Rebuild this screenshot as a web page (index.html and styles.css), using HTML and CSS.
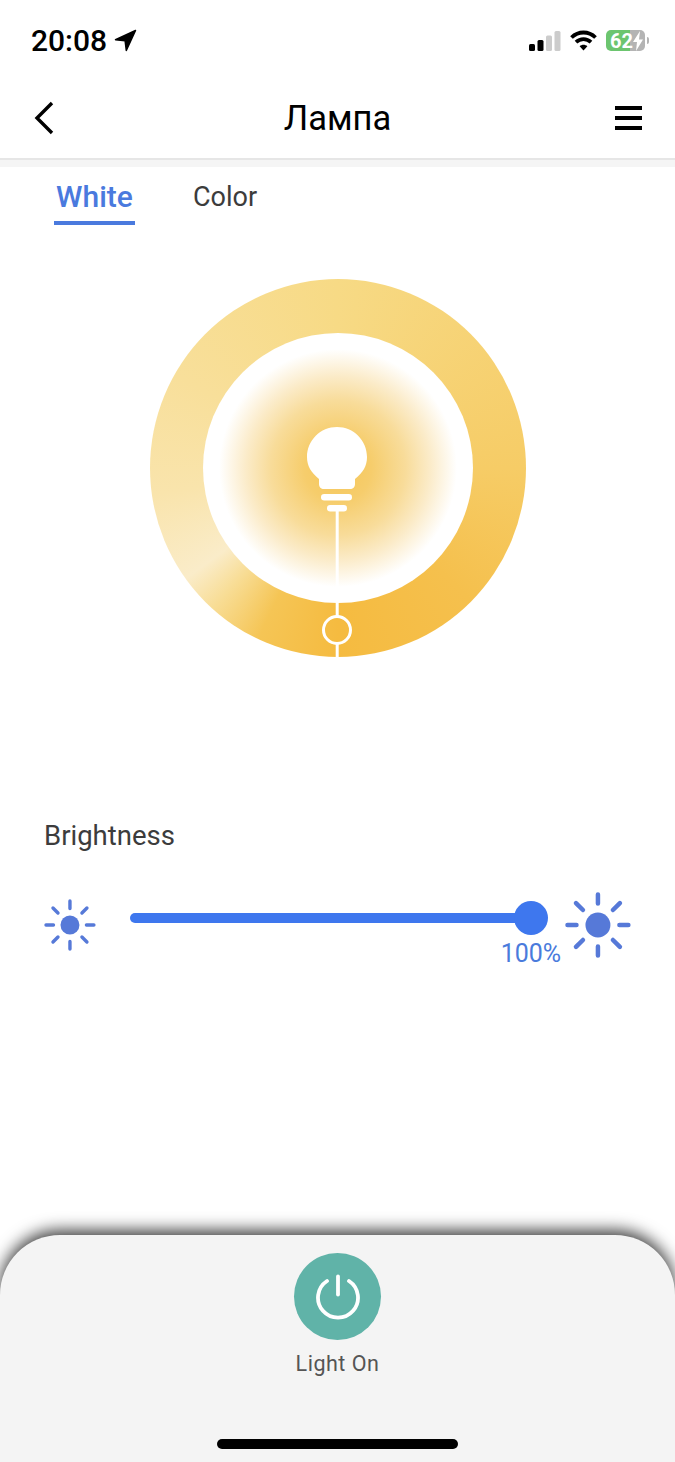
FILE: index.html
```html
<!DOCTYPE html>
<html lang="ru">
<head>
    <meta charset="UTF-8">
    <meta name="viewport" content="width=device-width, initial-scale=1.0">
    <title>Лампа</title>
    <link rel="stylesheet" href="styles.css">
</head>
<body>
    <div class="screen">
        <!-- Status bar -->
        <div class="status-bar">
            <div class="status-time">
                <span>20:08</span>
                <svg width="23" height="23" viewBox="0 0 23 23"><path d="M21.500 1.500 1.500 10.800l9.600.9 1.200 9.800z" fill="#000" stroke="#000" stroke-width="1.500" stroke-linejoin="round"/></svg>
            </div>
            <div class="status-icons">
                <svg width="32" height="20" viewBox="0 0 32 20">
                    <rect x="0" y="13" width="6" height="7" rx="1.500" fill="#000"/>
                    <rect x="8.500" y="9" width="6" height="11" rx="1.500" fill="#000"/>
                    <rect x="17" y="4.500" width="6" height="15.500" rx="1.500" fill="#ccc"/>
                    <rect x="25.500" y="0" width="6" height="20" rx="1.500" fill="#ccc"/>
                </svg>
                <svg width="27" height="21" viewBox="0 0 27 21" fill="none" stroke="#000" stroke-width="3.800">
                    <path d="M1.500 7.500C8.500 .8 18.500 .8 25.500 7.500"/>
                    <path d="M6 12.200c4.300-4.100 10.700-4.100 15 0"/>
                    <path d="M13.500 20.500 9.600 16.300c2.300-2 5.500-2 7.800 0z" fill="#000" stroke="none"/>
                </svg>
                <div class="battery">
                    <div class="battery-body">
                        <span class="battery-level">62</span>
                        <svg class="battery-bolt" width="12" height="20" viewBox="0 0 12 20"><path d="M8 0 1 11h4l-1 9 7-11.500H7z" fill="#fff"/></svg>
                    </div>
                    <div class="battery-cap"></div>
                </div>
            </div>
        </div>

        <!-- Header -->
        <div class="header">
            <svg width="24" height="34" viewBox="0 0 24 34" fill="none" stroke="#000" stroke-width="3.400"><path d="M20 2 5 17l15 15"/></svg>
            <div class="header-title">Лампа</div>
            <div class="menu-icon"><span></span><span></span><span></span></div>
        </div>

        <!-- Tabs -->
        <div class="tabs">
            <div class="tab tab-active">White</div>
            <div class="tab">Color</div>
        </div>

        <!-- Dial -->
        <div class="dial">
            <div class="dial-inner"></div>
            <svg class="dial-lamp" width="376" height="378" viewBox="150 279 376 378" fill="#fff">
                <path d="M337 427c-16.600 0-30 13.400-30 30 0 9 4 15.500 12 22v5c0 3 2 5 5 5h26c3 0 5-2 5-5v-5c8-6.500 12-13 12-22 0-16.600-13.400-30-30-30z"/>
                <rect x="321" y="494" width="31" height="6.500" rx="3.200"/>
                <rect x="327" y="505" width="20" height="6.500" rx="3.200"/>
                <rect x="335.700" y="511" width="3" height="105"/>
                <rect x="335.700" y="644" width="3" height="13"/>
                <circle cx="337" cy="630" r="13.500" fill="none" stroke="#fff" stroke-width="3"/>
            </svg>
        </div>

        <!-- Brightness -->
        <div class="brightness">
            <div class="brightness-label">Brightness</div>
            <div class="slider-row">
                <svg width="52" height="52" viewBox="-26 -26 52 52" stroke="#5679d8" stroke-width="3.400" stroke-linecap="round" fill="none">
                    <circle r="9.500" fill="#5679d8" stroke="none"/>
                    <path d="M0-24v7.500M0 16.500v7.500M-24 0h7.500M16.500 0h7.500M-17-17l5 5M17-17l-5 5M-17 17l5-5M17 17l-5-5"/>
                </svg>
                <div class="slider">
                    <div class="slider-track"></div>
                    <div class="slider-thumb"></div>
                    <div class="slider-value">100%</div>
                </div>
                <svg width="66" height="66" viewBox="-33 -33 66 66" stroke="#5679d8" stroke-width="4.500" stroke-linecap="round" fill="none">
                    <circle r="12.500" fill="#5679d8" stroke="none"/>
                    <path d="M0-30.500v9M0 21.500v9M-30.500 0h9M21.500 0h9M-22-22l7 7M22-22l-7 7M-22 22l7-7M22 22l-7-7"/>
                </svg>
            </div>
        </div>

        <!-- Bottom sheet -->
        <div class="sheet">
            <div class="power-btn">
                <svg width="46" height="46" viewBox="0 0 46 46" fill="none" stroke="#fff" stroke-width="3.800" stroke-linecap="round">
                    <path d="M12 7a20 20 0 1 0 22 0"/>
                    <path d="M23 2.500v18"/>
                </svg>
            </div>
            <div class="power-label">Light On</div>
            <div class="home-bar"></div>
        </div>
    </div>
</body>
</html>
```

FILE: styles.css
```css
body {
    font-family: Roboto, "Liberation Sans", sans-serif;
    background-color: #fff;
    margin: 0;
    padding: 0;
}

.screen {
    height: 1462px;
    display: flex;
    flex-direction: column;
    overflow: hidden;
}

/* Status bar */
.status-bar {
    height: 80px;
    padding: 1px 26px 0 31px;
    box-sizing: border-box;
    display: flex;
    justify-content: space-between;
    align-items: center;
    flex-shrink: 0;
}

.status-time {
    display: flex;
    align-items: center;
    gap: 7px;
    font-size: 30px;
    font-weight: 500;
    color: #000;
}

.status-icons {
    display: flex;
    align-items: center;
    gap: 9px;
}

.battery {
    display: flex;
    align-items: center;
    gap: 2px;
}

.battery-body {
    width: 39px;
    height: 21px;
    border-radius: 5px;
    background: linear-gradient(to right, #6cc56f 0, #6cc56f 62%, #b4b4b4 62%);
    display: flex;
    align-items: center;
    padding-left: 4px;
    box-sizing: border-box;
    position: relative;
}

.battery-level {
    font-size: 20px;
    font-weight: 700;
    color: #fff;
}

.battery-bolt {
    position: absolute;
    right: 1px;
    top: 1px;
}

.battery-cap {
    width: 2px;
    height: 7px;
    background-color: #b4b4b4;
    border-radius: 0 2px 2px 0;
}

/* Header */
.header {
    height: 80px;
    padding: 0 33px 2px 32px;
    display: flex;
    justify-content: space-between;
    align-items: center;
    border-bottom: 2px solid #e6e6e6;
    flex-shrink: 0;
    position: relative;
    box-sizing: border-box;
}

.header-title {
    position: absolute;
    left: 0;
    right: 0;
    text-align: center;
    font-size: 34.500px;
    color: #000;
}

.menu-icon {
    width: 27px;
    display: flex;
    flex-direction: column;
    gap: 6px;
}

.menu-icon span {
    display: block;
    height: 4px;
    background-color: #000;
}

/* Tabs */
.tabs {
    border-top: 7px solid #f5f5f5;
    padding-left: 54px;
    display: flex;
    gap: 58px;
    flex-shrink: 0;
}

.tab {
    height: 58px;
    box-sizing: border-box;
    padding-top: 14px;
    font-size: 27px;
    color: #3c3c3c;
}

.tab-active {
    width: 81px;
    text-align: center;
    font-size: 30px;
    padding-top: 12px;
    font-weight: 500;
    color: #4a7ade;
    border-bottom: 4px solid #4a7ade;
}

/* Dial */
.dial {
    width: 376px;
    height: 378px;
    margin: 54px 0 0 150px;
    border-radius: 50%;
    background: conic-gradient(#f7da85 0deg, #f6cc66 90deg, #f5c04d 135deg, #f5bb40 180deg, #f5c555 205deg, #f8dd96 222deg, #faecc9 234deg, #f9e4ac 262deg, #f8df9a 300deg, #f7da85 360deg);
    display: flex;
    align-items: center;
    justify-content: center;
    position: relative;
    flex-shrink: 0;
}

.dial-inner {
    width: 270px;
    height: 270px;
    border-radius: 50%;
    background: radial-gradient(circle closest-side, #f6c658 0, #f6cd6c 25%, #f8dc9a 50%, #fbebc8 68%, #fff 88%);
}

.dial-lamp {
    position: absolute;
    left: 0;
    top: 0;
}

/* Brightness */
.brightness {
    margin-top: 164px;
    flex-shrink: 0;
}

.brightness-label {
    padding-left: 44px;
    font-size: 27.500px;
    line-height: 30px;
    color: #3c3c3c;
}

.slider-row {
    margin-top: 41px;
    padding: 0 44px;
    height: 66px;
    display: flex;
    align-items: center;
}

.slider {
    width: 418px;
    margin: 0 18px 0 34px;
    height: 66px;
    position: relative;
}

.slider-track {
    position: absolute;
    left: 0;
    right: 20px;
    top: 21px;
    height: 10px;
    border-radius: 5px;
    background-color: #3e77ee;
}

.slider-thumb {
    position: absolute;
    right: -1px;
    top: 9px;
    width: 34px;
    height: 34px;
    border-radius: 50%;
    background-color: #3e77ee;
}

.slider-value {
    position: absolute;
    right: -14px;
    top: 48px;
    font-size: 25px;
    line-height: 27px;
    color: #4a7bdc;
}

/* Bottom sheet */
.sheet {
    margin-top: auto;
    height: 227px;
    flex-shrink: 0;
    background-color: #f4f4f4;
    border-radius: 60px 60px 0 0;
    box-shadow: 0 -5px 16px rgba(0, 0, 0, 0.75);
    display: flex;
    flex-direction: column;
    align-items: center;
    padding-top: 18px;
    box-sizing: border-box;
}

.power-btn {
    width: 87px;
    height: 87px;
    border-radius: 50%;
    background-color: #60b3a8;
    display: flex;
    align-items: center;
    justify-content: center;
}

.power-label {
    margin-top: 11px;
    font-size: 21.500px;
    line-height: 26px;
    letter-spacing: 0.500px;
    color: #555;
}

.home-bar {
    width: 241px;
    height: 10px;
    margin-top: 62px;
    border-radius: 5px;
    background-color: #000;
}
```
